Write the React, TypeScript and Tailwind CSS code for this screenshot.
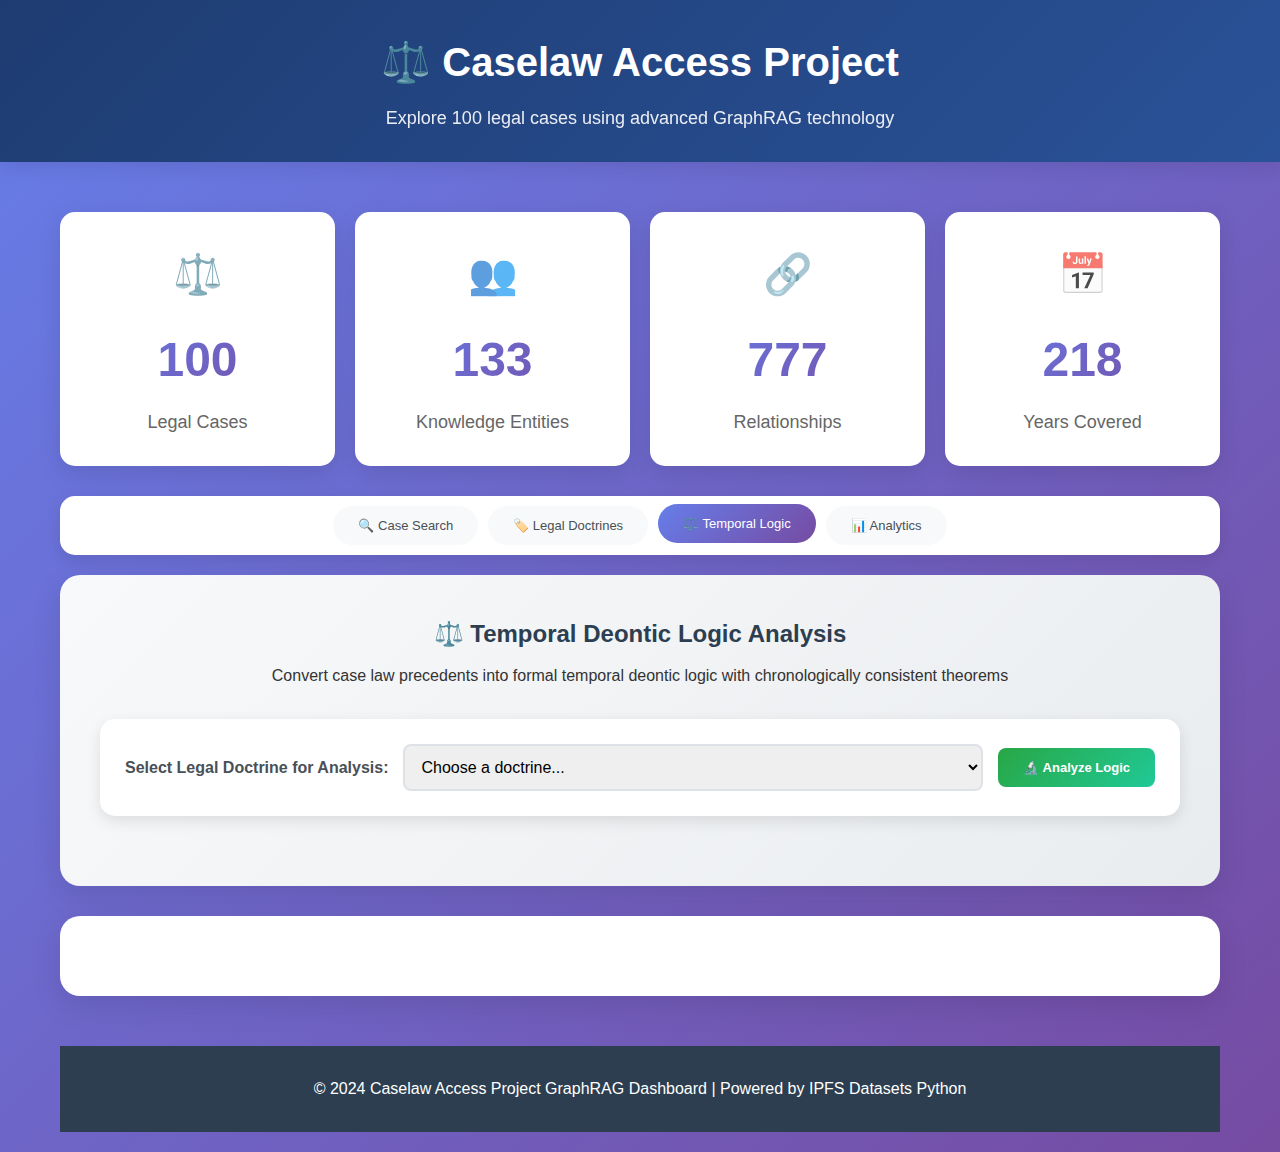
const stats = [
  { icon: '⚖️', value: '100', label: 'Legal Cases' },
  { icon: '👥', value: '133', label: 'Knowledge Entities' },
  { icon: '🔗', value: '777', label: 'Relationships' },
  { icon: '📅', value: '218', label: 'Years Covered' },
];

const tabs = [
  { label: '🔍 Case Search' },
  { label: '🏷️ Legal Doctrines' },
  { label: '⚖️ Temporal Logic', active: true },
  { label: '📊 Analytics' },
];

export default function App() {
  return (
    <div className="min-h-screen bg-linear-[135deg,#667eea_0%,#764ba2_100%] pb-5 font-['Liberation_Sans',sans-serif] leading-[26px] text-[#333]">
      <header className="bg-linear-[135deg,#1e3c72_0%,#2a5298_100%] px-5 py-[30px] text-center text-white shadow-[0_4px_20px_rgba(0,0,0,0.1)]">
        <h1 className="mb-2.5 text-[40px] leading-[64px] font-bold">⚖️ Caselaw Access Project</h1>
        <p className="text-lg leading-7 opacity-90">Explore 100 legal cases using advanced GraphRAG technology</p>
      </header>

      <main className="mx-auto mt-[50px] max-w-[1200px] px-5">
        <section className="mb-[30px] grid grid-cols-2 gap-5 lg:grid-cols-4">
          {stats.map((s) => (
            <article key={s.label} className="rounded-[15px] bg-white p-[30px] text-center shadow-[0_8px_25px_rgba(0,0,0,0.1)]">
              <div className="mb-[15px] text-[40px] leading-[64px] opacity-70">{s.icon}</div>
              <div className="mb-2.5 bg-linear-[135deg,#667eea,#764ba2] bg-clip-text text-[48px] leading-[77px] font-bold text-transparent">{s.value}</div>
              <div className="text-lg leading-7 text-[#666]">{s.label}</div>
            </article>
          ))}
        </section>

        <nav className="mb-5 flex flex-wrap justify-center gap-2.5 rounded-[15px] bg-white p-2.5 shadow-[0_5px_15px_rgba(0,0,0,0.1)]">
          {tabs.map((t) => (
            <button
              key={t.label}
              type="button"
              className={
                t.active
                  ? 'h-[39px] -translate-y-0.5 rounded-[25px] bg-linear-[135deg,#667eea_0%,#764ba2_100%] px-[25px] text-[13px] leading-[15px] text-white'
                  : 'h-[39px] rounded-[25px] bg-[#f8f9fa] px-[25px] text-[13px] leading-[15px] text-[#495057]'
              }
            >
              {t.label}
            </button>
          ))}
        </nav>

        <section className="mb-[30px] rounded-[20px] bg-linear-[135deg,#f8f9fa_0%,#e9ecef_100%] p-10 shadow-[0_10px_30px_rgba(0,0,0,0.1)]">
          <div className="mb-[30px] text-center">
            <h2 className="mb-2.5 text-2xl leading-[38px] font-bold text-[#2c3e50]">⚖️ Temporal Deontic Logic Analysis</h2>
            <p className="text-base leading-[26px]">
              Convert case law precedents into formal temporal deontic logic with chronologically consistent theorems
            </p>
          </div>
          <form className="mb-[30px] flex flex-wrap items-center gap-[15px] rounded-[15px] bg-white p-[25px] shadow-[0_5px_15px_rgba(0,0,0,0.1)]">
            <label htmlFor="doctrine" className="font-bold text-[#495057]">Select Legal Doctrine for Analysis:</label>
            <select id="doctrine" className="h-[47px] min-w-[250px] flex-1 rounded-lg border-2 border-[#dee2e6] bg-[#efefef] px-3 text-base text-black">
              <option>Choose a doctrine...</option>
            </select>
            <button type="button" className="h-[39px] rounded-lg bg-linear-[135deg,#28a745_0%,#20c997_100%] px-[25px] text-[13px] leading-[15px] font-bold text-white">
              🔬 Analyze Logic
            </button>
          </form>
        </section>

        <section aria-label="Results" className="mb-[50px] rounded-[20px] bg-white p-10 shadow-[0_10px_30px_rgba(0,0,0,0.1)]" />

        <footer className="bg-[#2c3e50] p-[30px] text-center text-white">
          <p>© 2024 Caselaw Access Project GraphRAG Dashboard | Powered by IPFS Datasets Python</p>
        </footer>
      </main>
    </div>
  );
}
